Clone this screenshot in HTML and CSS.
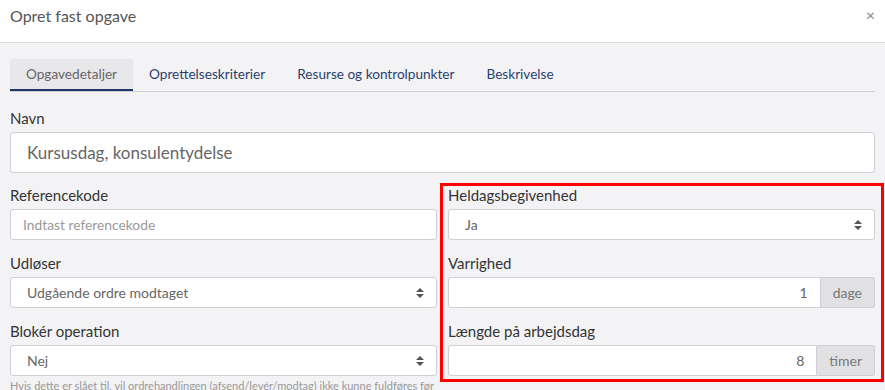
FILE: index.html
```html
<!DOCTYPE html>
<html lang="da">
<head>
<meta charset="UTF-8">
<meta name="viewport" content="width=device-width, initial-scale=1.0">
<title>Opret fast opgave</title>
<link rel="stylesheet" href="styles.css">
</head>
<body>
<div class="modal">
  <div class="modal-header">
    <h1>Opret fast opgave</h1>
    <span class="close">&times;</span>
  </div>

  <div class="modal-body">
    <ul class="tabs">
      <li class="active">Opgavedetaljer</li>
      <li>Oprettelseskriterier</li>
      <li>Resurse og kontrolpunkter</li>
      <li>Beskrivelse</li>
    </ul>

    <div class="field field-name">
      <label>Navn</label>
      <div class="input input-lg">Kursusdag, konsulentydelse</div>
    </div>

    <div class="columns">
      <div class="col">
        <div class="field">
          <label>Referencekode</label>
          <div class="input placeholder">Indtast referencekode</div>
        </div>
        <div class="field">
          <label>Udløser</label>
          <div class="input select">Udgående ordre modtaget</div>
        </div>
        <div class="field">
          <label>Blokér operation</label>
          <div class="input select">Nej</div>
          <p class="help">Hvis dette er slået til, vil ordrehandlingen (afsend/levér/modtag) ikke kunne fuldføres før</p>
        </div>
      </div>

      <div class="col marked">
        <div class="field">
          <label>Heldagsbegivenhed</label>
          <div class="input select">Ja</div>
        </div>
        <div class="field">
          <label>Varrighed</label>
          <div class="input-group">
            <div class="input number">1</div>
            <span class="addon">dage</span>
          </div>
        </div>
        <div class="field">
          <label>Længde på arbejdsdag</label>
          <div class="input-group">
            <div class="input number">8</div>
            <span class="addon">timer</span>
          </div>
        </div>
      </div>
    </div>
  </div>
</div>
</body>
</html>
```

FILE: styles.css
```css
* {
  box-sizing: border-box;
}

body {
  margin: 0;
  font-family: Lato, "Open Sans", sans-serif;
  background-color: #f3f3f5;
  color: #333;
  overflow: hidden;
}

.modal {
  width: 885px;
  height: 390px;
}

.modal-header {
  height: 43px;
  background-color: #fff;
  border-bottom: 1px solid #dcdcdf;
  display: flex;
  align-items: flex-start;
  justify-content: space-between;
  padding: 6px 10px 0 10px;
}

.modal-header h1 {
  margin: 0;
  font-size: 16px;
  line-height: 20px;
  font-weight: normal;
  color: #555;
}

.close {
  font-size: 16px;
  line-height: 18px;
  color: #888;
}

.modal-body {
  padding: 16px 10px 0 10px;
}

/* faner */
.tabs {
  list-style: none;
  margin: 0 0 16px;
  padding: 0;
  display: flex;
  border-bottom: 1px solid #cfcfd3;
  height: 33px;
}

.tabs li {
  padding: 0 16px;
  font-size: 13.6px;
  line-height: 31px;
  color: #2b3f6c;
}

.tabs li.active {
  background-color: #e8e8eb;
  color: #666;
  border-bottom: 2px solid #1e3768;
  border-radius: 3px 3px 0 0;
}

/* felter */
.field {
  margin-bottom: 13px;
}

.field-name {
  margin-bottom: 12px;
}

.field label {
  display: block;
  font-size: 15px;
  line-height: 20px;
  margin-bottom: 4px;
}

.input {
  height: 31px;
  background-color: #fff;
  border: 1px solid #cfcfd4;
  border-radius: 3px;
  padding: 0 12px;
  font-size: 14px;
  line-height: 29px;
  color: #666;
}

.input-lg {
  height: 41px;
  line-height: 39px;
  font-size: 17px;
  padding: 0 16px;
}

.placeholder {
  font-size: 13.8px;
  color: #999;
}

.select {
  position: relative;
  padding-left: 16px;
}

.select::after {
  content: "";
  position: absolute;
  right: 12px;
  top: 10px;
  width: 0;
  height: 0;
  border-left: 4px solid transparent;
  border-right: 4px solid transparent;
  border-bottom: 4px solid #555;
}

.select::before {
  content: "";
  position: absolute;
  right: 12px;
  top: 16px;
  width: 0;
  height: 0;
  border-left: 4px solid transparent;
  border-right: 4px solid transparent;
  border-top: 4px solid #555;
}

.columns {
  display: flex;
  align-items: flex-start;
  gap: 11px;
}

.col {
  flex: 1;
}

.marked {
  position: relative;
}

.marked .field:last-child {
  margin-bottom: 0;
}

.marked::after {
  content: "";
  position: absolute;
  top: -2px;
  left: -8px;
  right: -9px;
  bottom: -6px;
  border: 3px solid #f00;
  pointer-events: none;
}

.input-group {
  display: flex;
}

.input-group .input {
  flex: 1;
  border-radius: 3px 0 0 3px;
  text-align: right;
}

.addon {
  height: 31px;
  padding: 0 12px;
  background-color: #e1e1e4;
  border: 1px solid #cfcfd4;
  border-left: none;
  border-radius: 0 3px 3px 0;
  font-size: 14px;
  line-height: 29px;
  color: #777;
}

.help {
  margin: 3px 0 0;
  font-size: 11px;
  color: #999;
  white-space: nowrap;
}
```
